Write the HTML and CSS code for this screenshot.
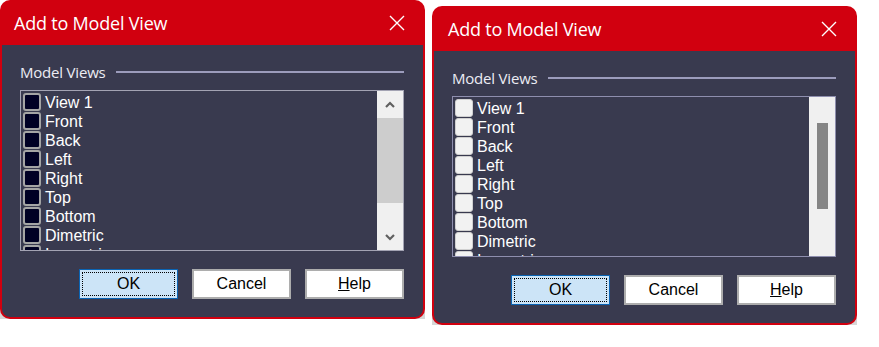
FILE: index.html
```html
<!DOCTYPE html>
<html lang="en">
<head>
    <meta charset="UTF-8">
    <meta name="viewport" content="width=device-width, initial-scale=1.0">
    <title>Add to Model View</title>
    <link rel="stylesheet" href="styles.css">
</head>
<body>
    <div class="screen">

        <!-- Classic theme dialog -->
        <div class="window window-classic">
            <div class="dialog">
                <div class="titlebar">
                    <span class="title">Add to Model View</span>
                    <svg class="close" width="16" height="16" viewBox="0 0 16 16">
                        <path d="M1 1 L15 15 M15 1 L1 15" stroke="#fff" stroke-width="1.4" fill="none"/>
                    </svg>
                </div>
                <div class="content">
                    <div class="group-header">
                        <span class="group-label">Model Views</span>
                        <span class="rule"></span>
                    </div>
                    <div class="listbox">
                        <ul class="items">
                            <li><span class="check"></span><span class="item-text">View 1</span></li>
                            <li><span class="check"></span><span class="item-text">Front</span></li>
                            <li><span class="check"></span><span class="item-text">Back</span></li>
                            <li><span class="check"></span><span class="item-text">Left</span></li>
                            <li><span class="check"></span><span class="item-text">Right</span></li>
                            <li><span class="check"></span><span class="item-text">Top</span></li>
                            <li><span class="check"></span><span class="item-text">Bottom</span></li>
                            <li><span class="check"></span><span class="item-text">Dimetric</span></li>
                            <li><span class="check"></span><span class="item-text">Isometric</span></li>
                            <li><span class="check"></span><span class="item-text">Trimetric</span></li>
                        </ul>
                        <div class="scrollbar">
                            <div class="arrow">
                                <svg width="10" height="8" viewBox="0 0 10 8">
                                    <path d="M1 6 L5 2 L9 6" stroke="#606060" stroke-width="2.2" fill="none"/>
                                </svg>
                            </div>
                            <div class="thumb"></div>
                            <div class="track"></div>
                            <div class="arrow">
                                <svg width="10" height="8" viewBox="0 0 10 8">
                                    <path d="M1 2 L5 6 L9 2" stroke="#606060" stroke-width="2.2" fill="none"/>
                                </svg>
                            </div>
                        </div>
                    </div>
                    <div class="buttons">
                        <button class="btn btn-default"><span class="focus">OK</span></button>
                        <button class="btn">Cancel</button>
                        <button class="btn"><span class="u">H</span>elp</button>
                    </div>
                </div>
            </div>
        </div>

        <!-- Modern theme dialog -->
        <div class="window window-modern">
            <div class="dialog">
                <div class="titlebar">
                    <span class="title">Add to Model View</span>
                    <svg class="close" width="16" height="16" viewBox="0 0 16 16">
                        <path d="M1 1 L15 15 M15 1 L1 15" stroke="#fff" stroke-width="1.4" fill="none"/>
                    </svg>
                </div>
                <div class="content">
                    <div class="group-header">
                        <span class="group-label">Model Views</span>
                        <span class="rule"></span>
                    </div>
                    <div class="listbox">
                        <ul class="items">
                            <li><span class="check"></span><span class="item-text">View 1</span></li>
                            <li><span class="check"></span><span class="item-text">Front</span></li>
                            <li><span class="check"></span><span class="item-text">Back</span></li>
                            <li><span class="check"></span><span class="item-text">Left</span></li>
                            <li><span class="check"></span><span class="item-text">Right</span></li>
                            <li><span class="check"></span><span class="item-text">Top</span></li>
                            <li><span class="check"></span><span class="item-text">Bottom</span></li>
                            <li><span class="check"></span><span class="item-text">Dimetric</span></li>
                            <li><span class="check"></span><span class="item-text">Isometric</span></li>
                            <li><span class="check"></span><span class="item-text">Trimetric</span></li>
                        </ul>
                        <div class="scrollbar">
                            <div class="thumb"></div>
                        </div>
                    </div>
                    <div class="buttons">
                        <button class="btn btn-default"><span class="focus">OK</span></button>
                        <button class="btn">Cancel</button>
                        <button class="btn"><span class="u">H</span>elp</button>
                    </div>
                </div>
            </div>
        </div>

    </div>
</body>
</html>
```

FILE: styles.css
```css
body {
    margin: 0;
    padding: 0;
    background-color: #fff;
    font-family: "Liberation Sans", Arial, sans-serif;
}

.screen {
    display: flex;
    align-items: flex-start;
    gap: 7px;
}

/* Window frame */
.window {
    width: 425px;
    background: linear-gradient(to bottom, transparent calc(100% - 12px), #d6d6d6 calc(100% - 12px));
}

.window-modern {
    margin-top: 6px;
}

.dialog {
    border-radius: 10px;
    overflow: hidden;
    background-color: #d1000f;
}

.titlebar {
    height: 45px;
    display: flex;
    align-items: center;
    justify-content: space-between;
    padding: 0 20px 0 14px;
}

.window-modern .titlebar {
    padding-left: 16px;
}

.title {
    color: #fff;
    font-family: "Open Sans", "Noto Sans", sans-serif;
    font-size: 18px;
    letter-spacing: -0.2px;
}

.close {
    display: block;
}

/* Body */
.content {
    background-color: #393a4f;
    margin: 0 2px 2px 2px;
    border-radius: 0 0 8px 8px;
    padding: 18px 19px 18px 18px;
}

.group-header {
    display: flex;
    align-items: center;
    height: 17px;
}

.group-label {
    color: #ececf4;
    font-family: "Open Sans", "Noto Sans", sans-serif;
    font-size: 15px;
    letter-spacing: -0.2px;
}

.rule {
    flex: 1;
    height: 2px;
    margin-left: 10px;
    background-color: #9c9cbc;
}

/* List box */
.listbox {
    margin-top: 10px;
    height: 161px;
    box-sizing: border-box;
    border: 1px solid #8e8eae;
    display: flex;
}

.window-classic .listbox {
    border-color: #a3a3b3;
}

.items {
    list-style-type: none;
    margin: 0;
    padding: 1px 0 0 2px;
    flex: 1;
    overflow: hidden;
}

.items li {
    display: flex;
    align-items: center;
    height: 19px;
}

.check {
    width: 18px;
    height: 18px;
    box-sizing: border-box;
    border-radius: 3px;
    margin-right: 4px;
    flex-shrink: 0;
}

.window-classic .check {
    background-color: #000024;
    border: 2px solid #a4a4a4;
}

.window-modern .check {
    background-color: #f2f2f2;
    border: 1px solid #d0d0d0;
}

.item-text {
    color: #fff;
    font-size: 16px;
    line-height: 19px;
    padding-top: 2px;
}

/* Scrollbar */
.scrollbar {
    width: 26px;
    background-color: #f0f0f0;
    display: flex;
    flex-direction: column;
}

.window-classic .arrow {
    height: 27px;
    display: flex;
    align-items: center;
    justify-content: center;
}

.window-classic .thumb {
    height: 85px;
    background-color: #cdcdcd;
}

.window-classic .track {
    flex: 1;
}

.window-modern .scrollbar {
    align-items: center;
    padding-top: 26px;
}

.window-modern .thumb {
    width: 11px;
    height: 86px;
    background-color: #858585;
}

/* Buttons */
.buttons {
    display: flex;
    justify-content: flex-end;
    gap: 14px;
    margin-top: 18px;
}

.btn {
    width: 99px;
    height: 30px;
    padding: 0;
    background-color: #fff;
    border: 2px solid #adadad;
    font-family: "Liberation Sans", Arial, sans-serif;
    font-size: 16px;
    color: #000;
}

.btn-default {
    background-color: #cce4f7;
    border: 1px solid #0a64b4;
    padding: 2px;
}

.focus {
    display: flex;
    align-items: center;
    justify-content: center;
    height: 100%;
    box-sizing: border-box;
    border: 1px dotted #000;
}

.u {
    text-decoration: underline;
}
```
